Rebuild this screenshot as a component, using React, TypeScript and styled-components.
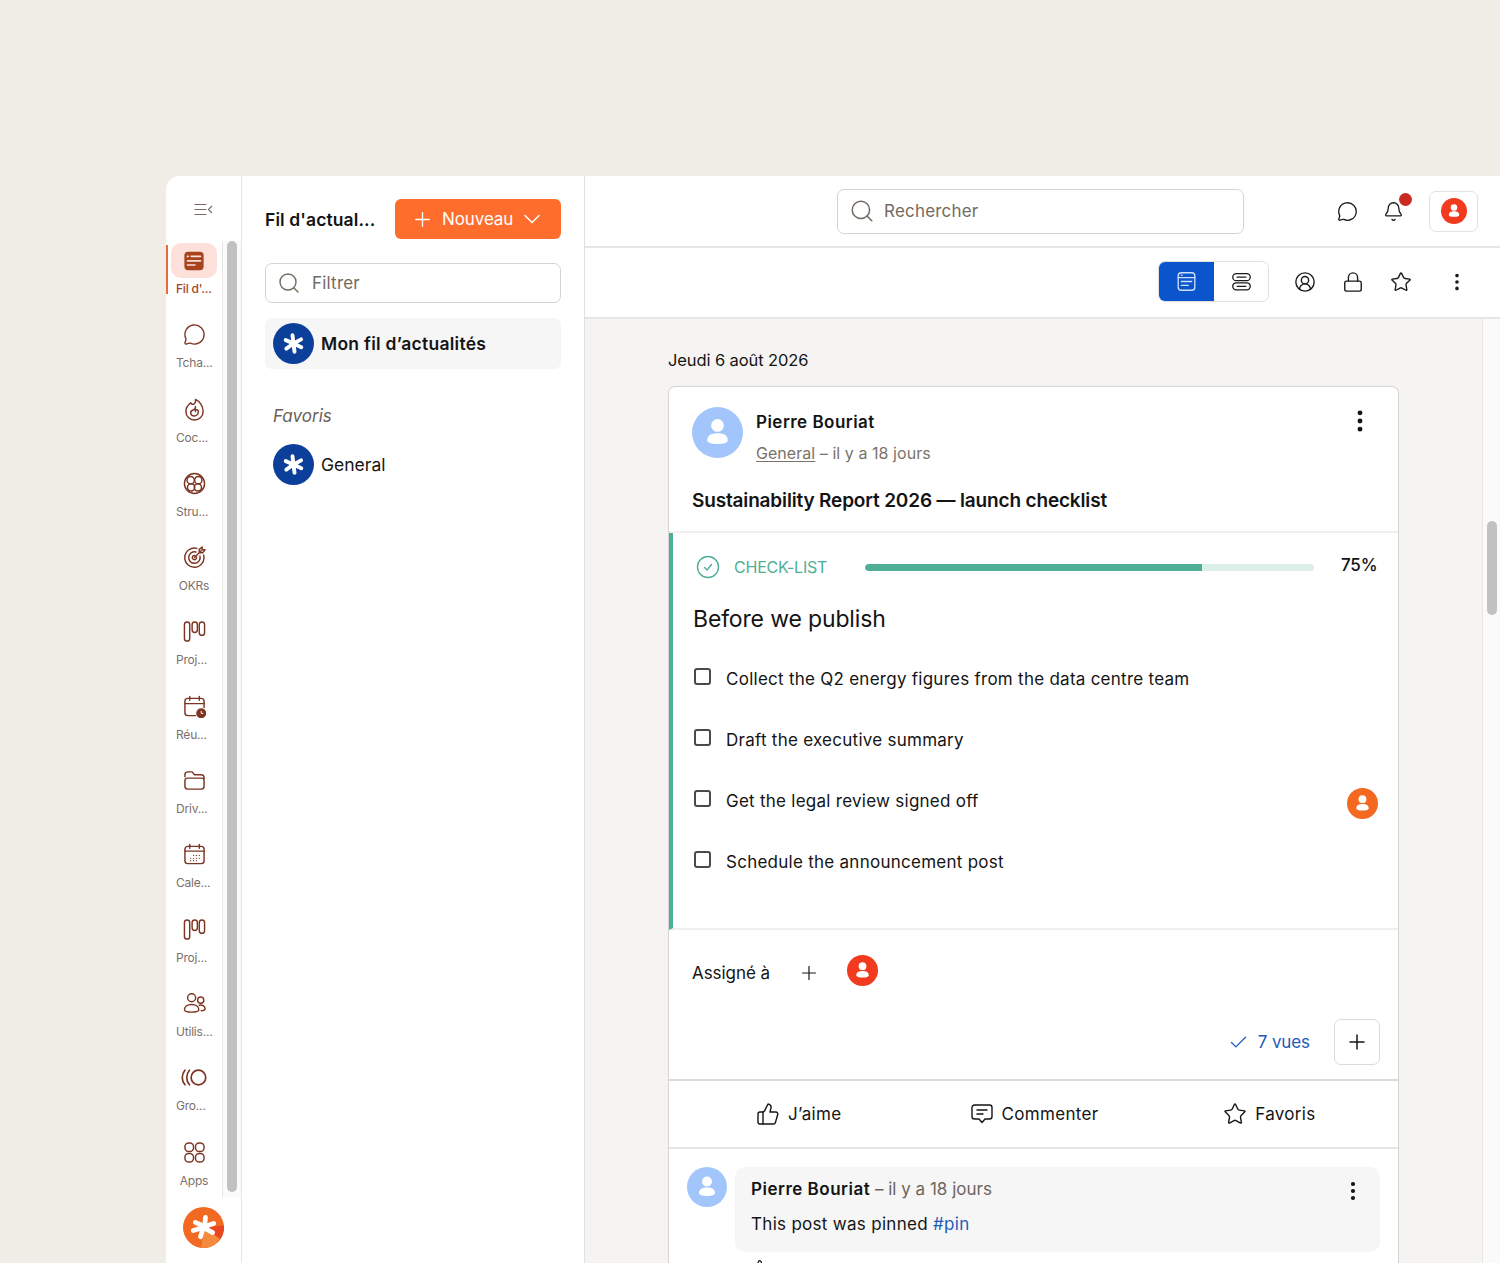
import React from "react";
import styled, { createGlobalStyle } from "styled-components";
import { Bell, Check, EllipsisVertical, Lock, MessageCircle, Plus, Search, Star, ThumbsUp, CircleUserRound } from "lucide-react";

const GlobalStyle = createGlobalStyle`
  html, body { margin: 0; padding: 0; height: 100%; overflow: hidden; }
  body { font-family: "Inter", "Liberation Sans", sans-serif; background: #f0ece6; color: #141414; }
  * { box-sizing: border-box; }
`;

const Page = styled.div`
  height: 1263px;
  padding: 176px 0 0 166px;
  background: #f0ece6;
  overflow: hidden;
`;

const Frame = styled.div`
  display: flex;
  height: 1087px;
  background: #fff;
  border-top-left-radius: 14px;
  overflow: hidden;
`;

const Rail = styled.aside`
  width: 76px;
  flex: none;
  display: flex;
  flex-direction: column;
  border-right: 1px solid #e6e4e1;
`;

const RailTop = styled.div`
  height: 65px;
  flex: none;
  display: flex;
  justify-content: center;
  align-items: center;
  padding-top: 1px;
  color: #7b6a66;
`;

const RailMiddle = styled.div`
  height: 956px;
  flex: none;
  display: flex;
`;

const Nav = styled.nav`
  width: 56px;
  flex: none;
  padding-top: 2px;
`;

const NavItem = styled.div<{ $active?: boolean }>`
  position: relative;
  height: 74.3px;
  display: flex;
  flex-direction: column;
  align-items: center;
  font-size: 12px;
  letter-spacing: -0.2px;
  color: ${(p) => (p.$active ? "#a8431f" : "#7d6f6a")};
  font-weight: ${(p) => (p.$active ? 500 : 400)};
  ${(p) =>
    p.$active &&
    `&::before {
      content: "";
      position: absolute;
      left: 0;
      top: 2px;
      width: 2px;
      height: 49px;
      background: #e8693a;
    }`}
`;

const NavIconBox = styled.div<{ $active?: boolean }>`
  width: 46px;
  height: 35px;
  display: flex;
  align-items: center;
  justify-content: center;
  border-radius: 10px;
  color: #7c3522;
  background: ${(p) => (p.$active ? "#fde0da" : "transparent")};
`;

const NavLabel = styled.span<{ $center?: boolean }>`
  width: 36px;
  margin-top: 3px;
  line-height: 16px;
  white-space: nowrap;
  text-align: ${(p) => (p.$center ? "center" : "left")};
`;

const ScrollTrack = styled.div<{ $width: number; $bg: string }>`
  width: ${(p) => p.$width}px;
  flex: none;
  background: ${(p) => p.$bg};
  border-left: 1px solid #e8e6e3;
`;

const RailThumb = styled.div`
  width: 10px;
  height: 951px;
  margin-left: 4px;
  background: #c1c1c1;
  border-radius: 5px;
`;

const RailBottom = styled.div`
  flex: 1;
  display: flex;
  padding: 10px 0 0 17px;
`;

const Panel = styled.section`
  width: 343px;
  flex: none;
  border-right: 1px solid #e2e0dd;
  padding: 23px 23px 0 23px;
`;

const PanelHead = styled.div`
  display: flex;
  align-items: center;
  justify-content: space-between;
  height: 40px;
`;

const PanelTitle = styled.h2`
  margin: 0;
  font-size: 17.5px;
  font-weight: 600;
  letter-spacing: 0.1px;
`;

const NewButton = styled.button`
  width: 166px;
  height: 40px;
  display: flex;
  align-items: center;
  gap: 8px;
  padding: 0 0 0 16px;
  border: none;
  border-radius: 6px;
  background: #ff6d2c;
  color: #fff;
  font: inherit;
  font-size: 17px;
  letter-spacing: -0.1px;
`;

const ChevronSlot = styled.span`
  display: flex;
  margin-left: 3px;
`;

const SearchBox = styled.div<{ $width: string; $height: number; $gap: number }>`
  width: ${(p) => p.$width};
  height: ${(p) => p.$height}px;
  display: flex;
  align-items: center;
  gap: ${(p) => p.$gap}px;
  padding-left: 11px;
  border: 1.5px solid #d6d4d1;
  border-radius: 7px;
  font-size: 17px;
  letter-spacing: 0.2px;
  color: #736a60;
  background: #fff;
`;

const FilterWrap = styled.div`
  margin-top: 24px;
`;

const FeedRow = styled.div<{ $selected?: boolean }>`
  height: 51px;
  display: flex;
  align-items: center;
  gap: 7px;
  padding-left: 8px;
  border-radius: 7px;
  font-size: 17.5px;
  letter-spacing: ${(p) => (p.$selected ? "0.27px" : "0")};
  font-weight: ${(p) => (p.$selected ? 600 : 400)};
  background: ${(p) => (p.$selected ? "#f6f6f6" : "transparent")};
`;

const FirstFeed = styled.div`
  margin-top: 15px;
`;

const SectionLabel = styled.div`
  margin: 35px 0 11px 8px;
  font-size: 17px;
  font-style: italic;
  color: #685f57;
  line-height: 24px;
`;

const Main = styled.main`
  flex: 1;
  min-width: 0;
  display: flex;
  flex-direction: column;
`;

const TopBar = styled.header`
  height: 72px;
  flex: none;
  display: flex;
  align-items: center;
  padding: 0 22px 0 252px;
  border-bottom: 2px solid #e6e5e3;
`;

const TopActions = styled.div`
  margin-left: auto;
  display: flex;
  align-items: center;
  gap: 25px;
`;

const IconSlot = styled.span`
  display: flex;
  position: relative;
  color: #1a1a1a;
`;

const RedDot = styled.span`
  position: absolute;
  top: -8px;
  right: -8px;
  width: 13px;
  height: 13px;
  border-radius: 50%;
  background: #cb2a20;
`;

const ProfileButton = styled.div`
  width: 49px;
  height: 41px;
  display: flex;
  align-items: center;
  justify-content: center;
  border: 1.5px solid #e3e2e0;
  border-radius: 7px;
  margin-left: 0;
`;

const ToolBar = styled.div`
  height: 71px;
  flex: none;
  display: flex;
  align-items: center;
  padding: 0 0 2px 573px;
  border-bottom: 2px solid #e6e5e3;
`;

const Toggle = styled.div`
  width: 111px;
  height: 41px;
  display: flex;
  border: 1.5px solid #e0dfdd;
  border-radius: 7px;
  overflow: hidden;
`;

const ToggleCell = styled.div<{ $on?: boolean }>`
  flex: ${(p) => (p.$on ? "0 0 55px" : "1")};
  display: flex;
  align-items: center;
  justify-content: center;
  background: ${(p) => (p.$on ? "#0a55cc" : "#fff")};
  color: ${(p) => (p.$on ? "#cfe0ff" : "#1a1a1a")};
`;

const ToolIcons = styled.div`
  display: flex;
  align-items: center;
  gap: 26px;
  margin-left: 25px;
  color: #1a1a1a;
`;

const MoreSlot = styled.span`
  display: flex;
  margin-left: 8px;
`;

const ContentRow = styled.div`
  flex: 1;
  min-height: 0;
  display: flex;
  background: #f5f4f2;
`;

const Feed = styled.div`
  flex: 1;
  min-width: 0;
  padding: 30px 0 0 83px;
  overflow: hidden;
`;

const DateLine = styled.div`
  font-size: 16.5px;
  line-height: 22px;
  letter-spacing: -0.1px;
  margin-bottom: 15px;
`;

const Card = styled.article`
  width: 731px;
  background: #fff;
  border: 1.5px solid #d5d4d1;
  border-bottom: none;
  border-radius: 7px 7px 0 0;
`;

const PostHead = styled.div`
  position: relative;
  height: 146px;
  padding: 20px 23px 0;
  border-bottom: 2px solid #f0efed;
`;

const Author = styled.div`
  display: flex;
  gap: 13px;
`;

const AuthorText = styled.div`
  padding-top: 2px;
`;

const AuthorName = styled.div`
  font-size: 17px;
  line-height: 26px;
  font-weight: 600;
  letter-spacing: 0.47px;
`;

const AuthorMeta = styled.div`
  margin-top: 6px;
  font-size: 16px;
  line-height: 24px;
  color: #7b7269;
  letter-spacing: 0.05px;
`;

const ChannelLink = styled.span`
  text-decoration: underline;
  text-underline-offset: 2px;
`;

const PostTitle = styled.h1`
  margin: 23px 0 0;
  font-size: 19px;
  line-height: 26px;
  font-weight: 600;
  letter-spacing: -0.16px;
`;

const PostMenu = styled.span`
  position: absolute;
  top: 20px;
  right: 24px;
  display: flex;
`;

const ChecklistBlock = styled.div`
  height: 397px;
  border-left: 4px solid #4fae98;
  border-bottom: 2px solid #f0efed;
  padding: 21px 20px 0 20px;
`;

const CheckHead = styled.div`
  display: flex;
  align-items: center;
  height: 26px;
  padding-left: 3px;
`;

const CheckTag = styled.span`
  margin-left: 14px;
  width: 131px;
  font-size: 16px;
  letter-spacing: -0.2px;
  color: #4fae98;
`;

const Progress = styled.div`
  width: 449px;
  height: 7px;
  background: #dcefe8;
  border-radius: 4px;
  overflow: hidden;
`;

const ProgressFill = styled.div`
  height: 100%;
  background: #4fae98;
  border-radius: 4px 0 0 4px;
`;

const Percent = styled.span`
  margin-left: 27px;
  margin-top: -4px;
  font-size: 17px;
  font-weight: 500;
  letter-spacing: -0.2px;
`;

const CheckTitle = styled.h3`
  margin: 24px 0 14px;
  font-size: 23px;
  line-height: 30px;
  font-weight: 400;
  letter-spacing: -0.15px;
`;

const CheckItem = styled.div`
  height: 61px;
  display: flex;
  align-items: center;
  gap: 15px;
  padding-left: 1px;
  font-size: 17px;
  letter-spacing: 0.26px;
`;

const Box = styled.span`
  width: 17px;
  height: 17px;
  flex: none;
  margin-top: -4px;
  border: 2px solid #4a4a48;
  border-radius: 3px;
`;

const ItemOwner = styled.span`
  margin-left: auto;
  margin-top: 6px;
  display: flex;
`;

const Assign = styled.div`
  height: 151px;
  position: relative;
  border-bottom: 2px solid #dcdbd9;
  padding: 24px 18px 0 23px;
`;

const AssignRow = styled.div`
  display: flex;
  align-items: center;
  height: 32px;
  font-size: 17px;
  letter-spacing: -0.05px;
`;

const AssignText = styled.span`
  margin-top: 5px;
  width: 108px;
`;

const AssignPlus = styled.span`
  display: flex;
  margin: 5px 0 0 -2px;
  width: 49px;
`;

const ViewsRow = styled.div`
  margin-top: 33px;
  display: flex;
  align-items: center;
  justify-content: flex-end;
`;

const Views = styled.span`
  display: flex;
  align-items: center;
  gap: 9px;
  margin-right: 24px;
  font-size: 17px;
  letter-spacing: -0.1px;
  color: #1e5bb8;
`;

const SquareButton = styled.div`
  width: 46px;
  height: 46px;
  display: flex;
  align-items: center;
  justify-content: center;
  border: 1.5px solid #dcdbd9;
  border-radius: 7px;
`;

const Actions = styled.div`
  height: 68px;
  display: grid;
  grid-template-columns: 1fr 1fr 1fr;
  border-bottom: 2px solid #e6e5e3;
  padding: 0 11px 0 12px;
`;

const ActionBtn = styled.div`
  display: flex;
  align-items: center;
  justify-content: center;
  gap: 8px;
  font-size: 17px;
  letter-spacing: 0.3px;
`;

const Comment = styled.div`
  display: flex;
  gap: 8px;
  padding: 18px 18px 0;
`;

const Bubble = styled.div`
  position: relative;
  flex: 1;
  height: 85px;
  background: #f6f6f6;
  border-radius: 10px;
  padding: 9px 16px;
  font-size: 17px;
`;

const BubbleHead = styled.div`
  line-height: 26px;
  color: #6d655d;
`;

const BubbleName = styled.span`
  font-weight: 600;
  letter-spacing: 0.5px;
  color: #141414;
`;

const BubbleText = styled.div`
  margin-top: 10px;
  line-height: 24px;
  letter-spacing: 0.3px;
`;

const HashTag = styled.span`
  color: #1e5bb8;
`;

const BubbleMenu = styled.span`
  position: absolute;
  top: 12px;
  right: 15px;
  display: flex;
`;

const CommentLike = styled.div`
  padding: 7px 0 0 80px;
`;

const MainScrollThumb = styled.div`
  width: 10px;
  height: 94px;
  margin: 202px 0 0 4px;
  background: #c1c1c1;
  border-radius: 5px;
`;

type Sized = { size?: number };

const Svg = ({ size = 23, children }: Sized & { children: React.ReactNode }) => (
  <svg width={size} height={size} viewBox="0 0 24 24" fill="none" stroke="currentColor" strokeWidth={1.5} strokeLinecap="round" strokeLinejoin="round">
    {children}
  </svg>
);

const NewsFilled = () => (
  <svg width={22} height={22} viewBox="0 0 24 24">
    <rect x="1.5" y="2" width="21" height="20" rx="4" fill="#a8431f" />
    <rect x="4" y="6" width="2.5" height="2" rx="1" fill="#fde0da" />
    <rect x="8" y="6" width="12" height="1.8" rx="0.9" fill="#fde0da" />
    <rect x="4" y="11" width="16" height="1.8" rx="0.9" fill="#fde0da" />
    <rect x="4" y="15.5" width="10" height="1.8" rx="0.9" fill="#fde0da" />
  </svg>
);
const Chat = () => <MessageCircle size={23} strokeWidth={1.4} />;
const Flame = () => (
  <Svg>
    <path d="M13 1.5c.5 3-1 5.5-3.5 5-.8-.2-1.3-.8-1.5-1.5C5 7.5 3 10.5 3 14a9 9 0 0 0 18 0c0-5.5-3.5-10.5-8-12.5z" />
    <path d="M13 9c.5 2-1 3-2.5 3.5-1.7.6-2.7 1.8-2.5 3.2.3 1.800 2 3 3.800 3 2.200 0 4.200-1.700 4.200-4 0-1.500-.8-2.500-1.800-2.500s-1.500.9-1.200 1.800" />
  </Svg>
);
const Structure = () => (
  <Svg>
    <circle cx="12" cy="12" r="10.5" />
    <circle cx="8" cy="8.5" r="3.8" />
    <circle cx="16" cy="8.5" r="3.8" />
    <circle cx="8.5" cy="16" r="3.8" />
    <circle cx="15.5" cy="16" r="3.8" />
  </Svg>
);
const TargetIcon = () => (
  <Svg>
    <path d="M14.5 2.5A10 10 0 1 0 21.5 9.5" />
    <path d="M13.5 6.3A6 6 0 1 0 17.7 10.5" />
    <path d="M12.5 10A2.2 2.2 0 1 0 14 11.5" />
    <path d="M12 12l7-7M17 3.5V7h3.5L23 4h-3V1z" />
  </Svg>
);
const Kanban = () => (
  <Svg>
    <rect x="1.5" y="2" width="5.5" height="20" rx="2.75" />
    <rect x="9.5" y="2" width="5.5" height="11" rx="2.75" />
    <rect x="17" y="2" width="5.5" height="14" rx="2.75" />
  </Svg>
);
const CalendarClock = () => (
  <svg width={23} height={23} viewBox="0 0 24 24" fill="none" stroke="currentColor" strokeWidth={1.5} strokeLinecap="round">
    <path d="M13 21.5H5a3 3 0 0 1-3-3V6.5a3 3 0 0 1 3-3h14a3 3 0 0 1 3 3V13" />
    <path d="M2 9h20M7 1.5v4M17 1.5v4" />
    <circle cx="19" cy="19" r="4.5" fill="currentColor" />
    <path d="M19 17v2.2h1.8" stroke="#fff" strokeWidth={1} />
  </svg>
);
const Folder = () => (
  <Svg>
    <path d="M2 8V6a3 3 0 0 1 3-3h4.5l2.5 3h7a3 3 0 0 1 3 3v1" />
    <path d="M4.5 9.5h15A2.5 2.5 0 0 1 22 12v6a3 3 0 0 1-3 3H5a3 3 0 0 1-3-3v-6a2.5 2.5 0 0 1 2.5-2.5z" />
  </Svg>
);
const CalendarGrid = () => (
  <Svg>
    <rect x="2" y="3.5" width="20" height="18" rx="3" />
    <path d="M2 8.5h20M7 1.5v4M17 1.5v4" />
    <path d="M8 16h.01M11 16h.01M14 16h.01M17 16h.01M11 13h.01M14 13h.01M17 13h.01M8 18.5h.01M11 18.5h.01M14 18.5h.01" strokeWidth={1.3} />
  </Svg>
);
const Users = () => (
  <Svg>
    <circle cx="9" cy="6" r="4.2" />
    <circle cx="18.5" cy="8.5" r="3.2" />
    <path d="M1.5 18.5c0-3.5 3.4-5.5 7.5-5.5s7.5 2 7.5 5.5c0 1.5-3.2 2.5-7.5 2.5s-7.5-1-7.5-2.5z" />
    <path d="M17 13.8c3-.8 6 .8 6 3.7 0 1.5-1.5 2-4 2" />
  </Svg>
);
const Groups = () => (
  <Svg size={27}>
    <circle cx="15.5" cy="12" r="6.5" />
    <path d="M7.5 5.5a10 10 0 0 0 0 13M3.5 5.5a10 10 0 0 0 0 13" />
  </Svg>
);
const Apps = () => (
  <Svg>
    <rect x="2" y="2" width="9" height="9" rx="4" />
    <rect x="13" y="2" width="9" height="9" rx="4" />
    <rect x="2" y="13" width="9" height="9" rx="4" />
    <rect x="13" y="13" width="9" height="9" rx="4" />
  </Svg>
);
const CollapseMenu = () => (
  <svg width={19} height={13} viewBox="0 0 19 13" fill="none" stroke="currentColor" strokeWidth={1.2} strokeLinecap="round" strokeLinejoin="round">
    <path d="M1 1.5h11M1 6.5h11M1 11.5h11M17.5 3.5l-3 3 3 3" />
  </svg>
);

const ChevronWide = () => (
  <svg width={16} height={10} viewBox="0 0 16 10" fill="none" stroke="currentColor" strokeWidth={1.5} strokeLinecap="round" strokeLinejoin="round">
    <path d="M1 1.5l7 7 7-7" />
  </svg>
);

const Asterisk = ({ size, fill }: { size: number; fill: string }) => (
  <svg width={size} height={size} viewBox="0 0 40 40" style={{ flex: "none" }}>
    <circle cx="20" cy="20" r="20" fill={fill} />
    <g stroke="#fff" strokeWidth={3.8} strokeLinecap="round">
      <path d="M20 20l-1-8M20 20l7.400-4M20 20l-7.600-3.300M20 20l7.600 3.600M20 20l-7 5M20 20l1 8" />
    </g>
  </svg>
);

const OrangeLogo = () => (
  <svg width={41} height={41} viewBox="0 0 40 40">
    <circle cx="20" cy="20" r="20" fill="#f26a22" />
    <path d="M20 20L40 18a20 20 0 0 1-7 17z" fill="#e9461f" />
    <path d="M20 20L36 31a20 20 0 0 1-18 9z" fill="#f58a3c" />
    <g stroke="#fff" strokeWidth={4.6} strokeLinecap="round">
      <path d="M21 19l1-9M21 19l9-3M21 19l-9-4M20 20l9 5M20 20l-10 3M20 20l-3 9" />
    </g>
  </svg>
);

const Avatar = ({ size, fill }: { size: number; fill: string }) => (
  <svg width={size} height={size} viewBox="0 0 40 40" style={{ flex: "none" }}>
    <circle cx="20" cy="20" r="20" fill={fill} />
    <circle cx="20" cy="14.5" r="5" fill="#fff" />
    <path d="M12 26c0-4 3.5-5.5 8-5.5s8 1.5 8 5.5c0 2-3 3-8 3s-8-1-8-3z" fill="#fff" />
  </svg>
);

const CheckCircle = () => (
  <svg width={24} height={24} viewBox="0 0 24 24" fill="none" stroke="#4fae98" strokeWidth={1.4} strokeLinecap="round" strokeLinejoin="round">
    <circle cx="12" cy="12" r="10.5" />
    <path d="M8.5 12.5l2.5 2.5 4.5-5.5" />
  </svg>
);

const CommentBubble = () => (
  <svg width={24} height={24} viewBox="0 0 24 24" fill="none" stroke="currentColor" strokeWidth={1.4} strokeLinecap="round" strokeLinejoin="round">
    <path d="M4.5 3h15A2.5 2.5 0 0 1 22 5.5v9a2.5 2.5 0 0 1-2.5 2.5H15l-3 3.5L9 17H4.5A2.5 2.5 0 0 1 2 14.5v-9A2.5 2.5 0 0 1 4.5 3z" />
    <path d="M7 8h10M7 12h6" />
  </svg>
);

const ListView = () => (
  <Svg size={21}>
    <rect x="2.5" y="2" width="19" height="20" rx="3.5" />
    <path d="M2.5 7.5h19M6 12h12M6 16.5h8" />
    <path d="M6 4.8h1" />
  </Svg>
);
const RowsView = () => (
  <Svg size={21}>
    <rect x="2" y="3" width="20" height="8" rx="4" />
    <rect x="2" y="13.5" width="20" height="8" rx="4" />
    <path d="M7 7h10M7 17.5h10" />
  </Svg>
);

const navItems: { label: string; icon: React.ReactNode; active?: boolean; center?: boolean }[] = [
  { label: "Fil d'...", icon: <NewsFilled />, active: true },
  { label: "Tcha...", icon: <Chat /> },
  { label: "Coc...", icon: <Flame /> },
  { label: "Stru...", icon: <Structure /> },
  { label: "OKRs", icon: <TargetIcon />, center: true },
  { label: "Proj...", icon: <Kanban /> },
  { label: "Réu...", icon: <CalendarClock /> },
  { label: "Driv...", icon: <Folder /> },
  { label: "Cale...", icon: <CalendarGrid /> },
  { label: "Proj...", icon: <Kanban /> },
  { label: "Utilis...", icon: <Users /> },
  { label: "Gro...", icon: <Groups /> },
  { label: "Apps", icon: <Apps />, center: true },
];

const checklist = [
  { text: "Collect the Q2 energy figures from the data centre team" },
  { text: "Draft the executive summary" },
  { text: "Get the legal review signed off", owner: true },
  { text: "Schedule the announcement post" },
];

export default function App() {
  return (
    <Page>
      <GlobalStyle />
      <Frame>
        <Rail>
          <RailTop>
            <CollapseMenu />
          </RailTop>
          <RailMiddle>
            <Nav>
              {navItems.map((item, i) => (
                <NavItem key={i} $active={item.active}>
                  <NavIconBox $active={item.active}>{item.icon}</NavIconBox>
                  <NavLabel $center={item.center}>{item.label}</NavLabel>
                </NavItem>
              ))}
            </Nav>
            <ScrollTrack $width={19} $bg="#fbfbfb">
              <RailThumb />
            </ScrollTrack>
          </RailMiddle>
          <RailBottom>
            <OrangeLogo />
          </RailBottom>
        </Rail>

        <Panel>
          <PanelHead>
            <PanelTitle>Fil d'actual...</PanelTitle>
            <NewButton>
              <Plus size={23} strokeWidth={1.4} />
              Nouveau
              <ChevronSlot>
                <ChevronWide />
              </ChevronSlot>
            </NewButton>
          </PanelHead>
          <FilterWrap>
            <SearchBox $width="100%" $height={40} $gap={11}>
              <Search size={24} strokeWidth={1.4} />
              Filtrer
            </SearchBox>
          </FilterWrap>
          <FirstFeed>
            <FeedRow $selected>
              <Asterisk size={41} fill="#0c3f9a" />
              Mon fil d’actualités
            </FeedRow>
          </FirstFeed>
          <SectionLabel>Favoris</SectionLabel>
          <FeedRow>
            <Asterisk size={41} fill="#0c3f9a" />
            General
          </FeedRow>
        </Panel>

        <Main>
          <TopBar>
            <SearchBox $width="407px" $height={45} $gap={9}>
              <Search size={26} strokeWidth={1.4} />
              Rechercher
            </SearchBox>
            <TopActions>
              <IconSlot>
                <MessageCircle size={21} strokeWidth={1.5} />
              </IconSlot>
              <IconSlot>
                <Bell size={21} strokeWidth={1.5} />
                <RedDot />
              </IconSlot>
              <ProfileButton>
                <Avatar size={26} fill="#f23a1f" />
              </ProfileButton>
            </TopActions>
          </TopBar>

          <ToolBar>
            <Toggle>
              <ToggleCell $on>
                <ListView />
              </ToggleCell>
              <ToggleCell>
                <RowsView />
              </ToggleCell>
            </Toggle>
            <ToolIcons>
              <CircleUserRound size={22} strokeWidth={1.5} />
              <Lock size={22} strokeWidth={1.5} />
              <Star size={22} strokeWidth={1.5} />
              <MoreSlot>
                <EllipsisVertical size={22} strokeWidth={2} />
              </MoreSlot>
            </ToolIcons>
          </ToolBar>

          <ContentRow>
            <Feed>
              <DateLine>Jeudi 6 août 2026</DateLine>
              <Card>
                <PostHead>
                  <Author>
                    <Avatar size={51} fill="#a2c6fb" />
                    <AuthorText>
                      <AuthorName>Pierre Bouriat</AuthorName>
                      <AuthorMeta>
                        <ChannelLink>General</ChannelLink> – il y a 18 jours
                      </AuthorMeta>
                    </AuthorText>
                  </Author>
                  <PostTitle>Sustainability Report 2026 — launch checklist</PostTitle>
                  <PostMenu>
                    <EllipsisVertical size={28} strokeWidth={2.2} />
                  </PostMenu>
                </PostHead>

                <ChecklistBlock>
                  <CheckHead>
                    <CheckCircle />
                    <CheckTag>CHECK-LIST</CheckTag>
                    <Progress>
                      <ProgressFill style={{ width: "75%" }} />
                    </Progress>
                    <Percent>75%</Percent>
                  </CheckHead>
                  <CheckTitle>Before we publish</CheckTitle>
                  {checklist.map((item) => (
                    <CheckItem key={item.text}>
                      <Box />
                      {item.text}
                      {item.owner && (
                        <ItemOwner>
                          <Avatar size={31} fill="#f2691f" />
                        </ItemOwner>
                      )}
                    </CheckItem>
                  ))}
                </ChecklistBlock>

                <Assign>
                  <AssignRow>
                    <AssignText>Assigné à</AssignText>
                    <AssignPlus>
                      <Plus size={22} strokeWidth={1.3} />
                    </AssignPlus>
                    <Avatar size={31} fill="#f23a1f" />
                  </AssignRow>
                  <ViewsRow>
                    <Views>
                      <Check size={21} strokeWidth={1.5} />7 vues
                    </Views>
                    <SquareButton>
                      <Plus size={24} strokeWidth={1.5} />
                    </SquareButton>
                  </ViewsRow>
                </Assign>

                <Actions>
                  <ActionBtn>
                    <ThumbsUp size={24} strokeWidth={1.4} />
                    J’aime
                  </ActionBtn>
                  <ActionBtn>
                    <CommentBubble />
                    Commenter
                  </ActionBtn>
                  <ActionBtn>
                    <Star size={24} strokeWidth={1.4} />
                    Favoris
                  </ActionBtn>
                </Actions>

                <Comment>
                  <Avatar size={40} fill="#a2c6fb" />
                  <Bubble>
                    <BubbleHead>
                      <BubbleName>Pierre Bouriat</BubbleName> – il y a 18 jours
                    </BubbleHead>
                    <BubbleText>
                      This post was pinned <HashTag>#pin</HashTag>
                    </BubbleText>
                    <BubbleMenu>
                      <EllipsisVertical size={24} strokeWidth={2.2} />
                    </BubbleMenu>
                  </Bubble>
                </Comment>
                <CommentLike>
                  <ThumbsUp size={20} strokeWidth={1.4} />
                </CommentLike>
              </Card>
            </Feed>
            <ScrollTrack $width={18} $bg="#fafafa">
              <MainScrollThumb />
            </ScrollTrack>
          </ContentRow>
        </Main>
      </Frame>
    </Page>
  );
}
